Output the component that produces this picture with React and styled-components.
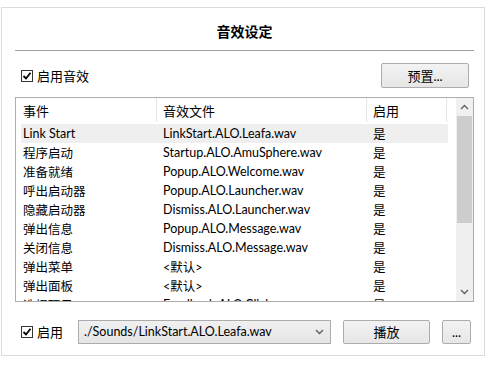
import React from "react";
import styled, { createGlobalStyle } from "styled-components";

const Global = createGlobalStyle`
  body {
    margin: 0;
    background: #fff;
    font-family: "Lato", "Noto Sans CJK SC", sans-serif;
    font-size: 13px;
    color: #000;
  }
`;

const Frame = styled.div`
  box-sizing: border-box;
  width: 484px;
  height: 349px;
  margin: 7px 0 0 1px;
  border: 1px solid #dcdcdc;
  padding: 0 10px 0 13px;
  display: flex;
  flex-direction: column;
`;

const Title = styled.div`
  height: 43px;
  padding-top: 14px;
  box-sizing: border-box;
  text-align: center;
  font-weight: bold;
  font-size: 14px;
  line-height: 20px;
  border-bottom: 1px solid #a0a0a0;
`;

const ControlRow = styled.div`
  display: flex;
  align-items: center;
  height: 25px;
  margin-top: ${(p) => p.top}px;
  padding: 0 5px 0 6px;
`;

const CheckLabel = styled.label`
  display: flex;
  align-items: center;
  gap: 4px;
  line-height: 16px;
  white-space: nowrap;
  flex-shrink: 0;
  width: ${(p) => (p.w ? `${p.w}px` : "auto")};
  margin-right: ${(p) => (p.w ? "0" : "auto")};
`;

const Box = styled.span`
  box-sizing: border-box;
  width: 12px;
  height: 12px;
  border: 1px solid #333;
  background: #fff;
  display: flex;
  align-items: center;
  justify-content: center;
`;

const Button = styled.button`
  box-sizing: border-box;
  flex-shrink: 0;
  width: ${(p) => p.w}px;
  height: ${(p) => p.h || 24}px;
  margin-left: ${(p) => p.gap || 0}px;
  border: 1px solid #acacac;
  border-radius: 2px;
  background: linear-gradient(#f3f3f3, #e6e6e6);
  font-family: inherit;
  font-size: 13px;
  color: #000;
  padding: 0;
`;

const Select = styled.div`
  box-sizing: border-box;
  flex-shrink: 0;
  width: 253px;
  height: 24px;
  border: 1px solid #acacac;
  background: linear-gradient(#f0f0f0, #e5e5e5);
  display: flex;
  align-items: center;
  padding: 0 6px 0 5px;
  font-size: 12.5px;
`;

const SelectText = styled.span`
  flex: 1;
  white-space: nowrap;
`;

const ListBox = styled.div`
  box-sizing: border-box;
  height: 205px;
  margin-top: 9px;
  border: 1px solid #adadad;
  display: flex;
  overflow: hidden;
`;

const ListMain = styled.div`
  flex: 1;
  padding: 0 8px 0 5px;
  overflow: hidden;
`;

const Header = styled.div`
  display: flex;
  height: 24px;
  margin-bottom: 2px;
  align-items: center;
`;

const Row = styled.div`
  display: flex;
  height: 19px;
  align-items: center;
  background: ${(p) => (p.selected ? "#efefef" : "transparent")};
`;

const Cell = styled.div`
  box-sizing: border-box;
  width: ${(p) => p.w}px;
  padding-left: ${(p) => p.pad}px;
  white-space: nowrap;
  overflow: hidden;
  font-size: 12.5px;
`;

const HeadCell = styled(Cell)`
  height: 100%;
  display: flex;
  align-items: center;
  border-right: 1px solid #e5e5e5;
  font-size: 13px;
`;

const Scrollbar = styled.div`
  width: 17px;
  background: #f0f0f0;
  display: flex;
  flex-direction: column;
`;

const Arrow = styled.div`
  height: 18px;
  display: flex;
  align-items: center;
  justify-content: center;
`;

const Thumb = styled.div`
  height: 107px;
  margin: 0 1px;
  background: #cdcdcd;
`;

const Track = styled.div`
  flex: 1;
`;

const Check = () => (
  <Box>
    <svg width="10" height="10" viewBox="0 0 10 10">
      <path d="M1.5 5 L4 7.5 L8.5 1.8" fill="none" stroke="#000" strokeWidth="1.8" />
    </svg>
  </Box>
);

const Chevron = ({ up }) => (
  <svg width="9" height="6" viewBox="0 0 9 6">
    <path
      d={up ? "M1 5 L4.5 1.5 L8 5" : "M1 1 L4.5 4.5 L8 1"}
      fill="none"
      stroke="#606060"
      strokeWidth="1.4"
    />
  </svg>
);

const rows = [
  ["Link Start", "LinkStart.ALO.Leafa.wav", "是"],
  ["程序启动", "Startup.ALO.AmuSphere.wav", "是"],
  ["准备就绪", "Popup.ALO.Welcome.wav", "是"],
  ["呼出启动器", "Popup.ALO.Launcher.wav", "是"],
  ["隐藏启动器", "Dismiss.ALO.Launcher.wav", "是"],
  ["弹出信息", "Popup.ALO.Message.wav", "是"],
  ["关闭信息", "Dismiss.ALO.Message.wav", "是"],
  ["弹出菜单", "<默认>", "是"],
  ["弹出面板", "<默认>", "是"],
  ["选择项目", "Feedback.ALO.Click.wav", "是"],
];

export default function App() {
  return (
    <>
      <Global />
      <Frame>
        <Title>音效设定</Title>
        <ControlRow top={12}>
          <CheckLabel>
            <Check />
            启用音效
          </CheckLabel>
          <Button w={88} h={25}>预置...</Button>
        </ControlRow>
        <ListBox>
          <ListMain>
            <Header>
              <HeadCell w={136} pad={2}>事件</HeadCell>
              <HeadCell w={210} pad={6}>音效文件</HeadCell>
              <HeadCell w={80} pad={6}>启用</HeadCell>
            </Header>
            {rows.map((r, i) => (
              <Row key={i} selected={i === 0}>
                <Cell w={136} pad={2}>{r[0]}</Cell>
                <Cell w={210} pad={6}>{r[1]}</Cell>
                <Cell w={80} pad={6}>{r[2]}</Cell>
              </Row>
            ))}
          </ListMain>
          <Scrollbar>
            <Arrow><Chevron up /></Arrow>
            <Thumb />
            <Track />
            <Arrow><Chevron /></Arrow>
          </Scrollbar>
        </ListBox>
        <ControlRow top={17}>
          <CheckLabel as="div" w={57}>
            <Check />
            启用
          </CheckLabel>
          <Select>
            <SelectText>./Sounds/LinkStart.ALO.Leafa.wav</SelectText>
            <Chevron />
          </Select>
          <Button w={87} gap={12}>播放</Button>
          <Button w={29} gap={12}>...</Button>
        </ControlRow>
      </Frame>
    </>
  );
}
